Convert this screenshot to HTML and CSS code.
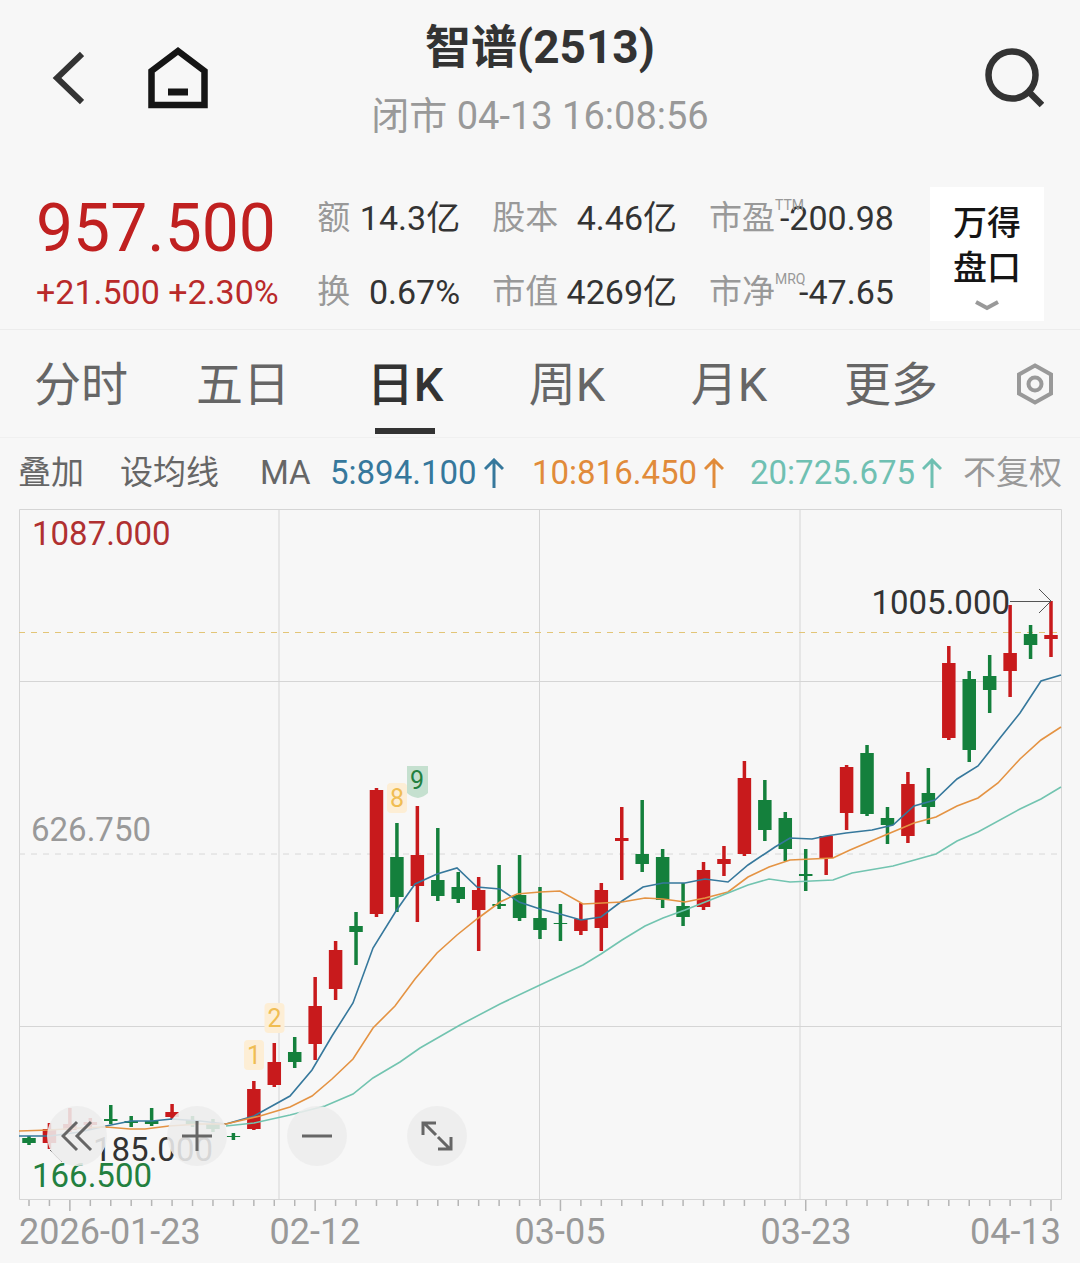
FILE: index.html
```html
<!DOCTYPE html>
<html lang="zh-CN">
<head>
  <meta charset="UTF-8" />
  <meta name="viewport" content="width=device-width, initial-scale=1.0" />
  <title>智谱(2513)</title>
  <link rel="stylesheet" href="styles.css">
</head>
<body>
  <header class="header">
    <nav class="header-left">
      <button class="icon-btn" aria-label="返回">
        <svg width="32" height="56" viewBox="0 0 32 56"><path d="M30 4L5 28l25 24" fill="none" stroke="#333" stroke-width="6"/></svg>
      </button>
      <a class="icon-btn" href="#" aria-label="首页">
        <svg width="60" height="64" viewBox="0 0 60 64"><path d="M3.500 59V25L30 5l26.500 20v34z" fill="none" stroke="#151515" stroke-width="6.500"/><path d="M20 46h20" stroke="#151515" stroke-width="7"/></svg>
      </a>
    </nav>
    <div class="header-title">
      <h1>智谱(2513)</h1>
      <p>闭市 04-13 16:08:56</p>
    </div>
    <button class="icon-btn search" aria-label="搜索">
      <svg width="60" height="62" viewBox="0 0 60 62"><circle cx="28" cy="29" r="23.500" fill="none" stroke="#333" stroke-width="6.500"/><path d="M44 45l14 14" stroke="#333" stroke-width="6.500"/></svg>
    </button>
  </header>

  <section class="quote">
    <div class="price">
      <strong>957.500</strong>
      <span>+21.500 +2.30%</span>
    </div>
    <dl class="stats">
      <div><dt>额</dt><dd>14.3亿</dd></div>
      <div><dt>股本</dt><dd>4.46亿</dd></div>
      <div><dt>市盈<sup>TTM</sup></dt><dd>-200.98</dd></div>
      <div><dt>换</dt><dd>0.67%</dd></div>
      <div><dt>市值</dt><dd>4269亿</dd></div>
      <div><dt>市净<sup>MRQ</sup></dt><dd>-47.65</dd></div>
    </dl>
    <button class="wind">
      <span>万得</span>
      <span>盘口</span>
      <svg width="26" height="12" viewBox="0 0 26 12"><path d="M2 3l11 6 11-6" fill="none" stroke="#999" stroke-width="4"/></svg>
    </button>
  </section>

  <nav class="tabs">
    <button>分时</button>
    <button>五日</button>
    <button class="active">日K</button>
    <button>周K</button>
    <button>月K</button>
    <button>更多</button>
    <button class="settings" aria-label="设置">
      <svg width="38" height="44" viewBox="0 0 38 44"><path d="M19 3.500L35 12.500v19L19 40.500 3 31.500v-19z" fill="none" stroke="#999" stroke-width="4"/><circle cx="19" cy="22" r="6.500" fill="none" stroke="#999" stroke-width="4"/></svg>
    </button>
  </nav>

  <div class="ma-row">
    <button>叠加</button>
    <button>设均线</button>
    <span>MA</span>
    <span class="ma5">5:894.100<svg class="up" viewBox="0 0 20 30"><path d="M10 30V2M1 11l9-9 9 9"/></svg></span>
    <span class="ma10">10:816.450<svg class="up" viewBox="0 0 20 30"><path d="M10 30V2M1 11l9-9 9 9"/></svg></span>
    <span class="ma20">20:725.675<svg class="up" viewBox="0 0 20 30"><path d="M10 30V2M1 11l9-9 9 9"/></svg></span>
    <button class="adjust">不复权</button>
  </div>

  <main class="chart">
    <svg id="kline" viewBox="0 500 1080 763" role="img" aria-label="日K线"></svg>
    <div class="chart-tools">
      <button aria-label="向左">
        <svg width="32" height="32" viewBox="0 0 32 32"><path d="M16 2L2 16l14 14M30 2L16 16l14 14"/></svg>
      </button>
      <button aria-label="放大">
        <svg width="32" height="32" viewBox="0 0 32 32"><path d="M16 1v30M1 16h30"/></svg>
      </button>
      <button aria-label="缩小">
        <svg width="32" height="32" viewBox="0 0 32 32"><path d="M1 16h30"/></svg>
      </button>
      <button aria-label="全屏">
        <svg width="32" height="32" viewBox="0 0 32 32"><path d="M2 15V3h13M3 3l12 12M30 17v12H17M29 29L17 17"/></svg>
      </button>
    </div>
  </main>

  <script src="chart.js"></script>
</body>
</html>
```

FILE: styles.css
```css
* { box-sizing: border-box; }
body { margin: 0; background: #f7f7f7; color: #333; font-family: Roboto, "Noto Sans CJK SC", sans-serif; font-size: 34px; }
button { border: 0; padding: 0; background: none; font: inherit; color: inherit; cursor: pointer; }
svg { display: block; }
h1, p, dl, dd { margin: 0; }

.header { display: grid; grid-template-columns: 1fr auto 1fr; align-items: start; height: 170px; padding: 16px 36px 0 52px; }
.header-left { display: flex; align-items: center; gap: 64px; padding-top: 30px; }
.header-title { text-align: center; margin-right: 16px; }
.header-title h1 { font-size: 46px; line-height: 62px; font-weight: 700; }
.header-title p { font-size: 38px; line-height: 44px; margin-top: 16px; color: #999; }
.search { justify-self: end; padding-top: 30px; }

.quote { display: grid; grid-template-columns: 249fr 576fr 114fr; grid-template-rows: 100%; column-gap: 34px; height: 160px; padding: 17px 36px 8px; border-bottom: 1px solid #ececec; }
.price { color: #b92a2a; white-space: nowrap; }
.price strong { display: block; font-size: 66px; line-height: 84px; font-weight: 400; color: #c02020; }
.price span { display: block; line-height: 42px; }
.stats { display: grid; grid-template-columns: 143fr 185fr 185fr; grid-auto-rows: 74px; column-gap: 32px; margin: -6px 2px 0 -2px; line-height: 40px; }
.stats div { display: flex; align-items: center; justify-content: space-between; white-space: nowrap; }
.stats dt { position: relative; font-size: 33px; color: #999; }
.stats sup { position: absolute; left: 100%; bottom: 100%; margin-bottom: -15px; font-size: 14px; line-height: 16px; }
.wind { display: flex; flex-direction: column; align-items: center; align-self: start; padding: 14px 0 10px; background: #fff; color: #151515; font-weight: 500; line-height: 45px; }
.wind svg { margin-top: 8px; }

.tabs { display: grid; grid-template-columns: repeat(6, 3fr) 2fr; height: 108px; border-bottom: 1px solid #f0f0f0; }
.tabs button { position: relative; padding-top: 2px; font-size: 47px; line-height: 60px; color: #666; }
.tabs .active { color: #333; font-weight: 500; }
.tabs .active::after { content: ""; position: absolute; left: 50%; bottom: 3px; width: 60px; height: 6px; margin-left: -30px; background: #333; }
.tabs .settings { justify-self: end; padding: 0 26px; }

.ma-row { display: grid; grid-template-columns: 102fr 140fr 70fr 202fr 218fr 213fr 98fr; align-items: center; height: 62px; padding: 8px 18px 0; font-size: 33px; line-height: 40px; color: #666; white-space: nowrap; }
.ma-row button { text-align: left; }
.ma-row span { display: flex; align-items: center; gap: 7px; }
.ma-row .ma5 { color: #36789c; }
.ma-row .ma10 { color: #e18b3a; }
.ma-row .ma20 { color: #6fc0b2; }
.ma-row .adjust { color: #999; }
.up { width: 20px; height: 30px; fill: none; stroke: currentColor; stroke-width: 3; }

.chart { position: relative; }
.chart > svg { width: 100%; }
.grid { stroke: #d5d5d5; fill: none; }
.tick { stroke: #b5b5b5; stroke-width: 1.5; }
.dash { stroke: #d8d8d8; stroke-dasharray: 6 6; }
.dash.last { stroke: #e3c577; }
.up-candle { fill: #c81a1c; }
.down-candle { fill: #14803c; }
.line { fill: none; stroke-width: 1.6; }
.line5 { stroke: #36789c; }
.line10 { stroke: #e49343; }
.line20 { stroke: #72c4b0; }
.pointer { fill: none; stroke: #555; }
.text { font-size: 33px; fill: #333; }
.text.high { fill: #b03030; }
.text.mid { fill: #999; }
.text.low { fill: #23803f; }
.date { font-size: 36px; fill: #999; }
.signal { font-size: 25px; text-anchor: middle; fill: #f0bd53; }
.signal.nine { fill: #23803f; }
.signal-bg { fill: #fdeed5; }
.signal-bg.nine { fill: #c5e0cf; }

.chart-tools { position: absolute; left: 47px; bottom: 97px; display: flex; gap: 60px; }
.chart-tools button { display: flex; align-items: center; justify-content: center; width: 60px; height: 60px; border-radius: 50%; background: rgba(237, 237, 237, 0.88); }
.chart-tools svg { fill: none; stroke: #666; stroke-width: 3; }
```

FILE: chart.js
```js
// one row per day: up/down, then y of high, body top, body bottom, low
const candles = [
  ['d', 1136, 1138, 1143, 1145], ['u', 1123, 1129, 1143, 1149], ['u', 1108, 1124, 1130, 1132],
  ['u', 1118, 1122, 1125, 1130], ['d', 1105, 1119, 1121, 1124], ['d', 1116, 1121, 1123, 1127],
  ['d', 1108, 1121, 1124, 1126], ['u', 1104, 1112, 1117, 1119], ['d', 1116, 1120, 1124, 1127],
  ['d', 1119, 1124, 1129, 1132], ['d', 1133, 1136, 1137, 1140], ['u', 1081, 1089, 1129, 1130],
  ['u', 1043, 1062, 1085, 1087], ['d', 1037, 1052, 1062, 1068], ['u', 977, 1006, 1044, 1060],
  ['u', 941, 950, 989, 1000], ['d', 912, 926, 932, 965], ['u', 788, 790, 914, 917],
  ['d', 823, 857, 897, 912], ['u', 806, 855, 886, 922], ['d', 828, 880, 896, 901],
  ['d', 872, 887, 899, 903], ['u', 877, 890, 910, 951], ['d', 865, 904, 906, 909],
  ['d', 855, 895, 918, 921], ['d', 887, 918, 930, 939], ['d', 904, 923, 924, 941],
  ['u', 903, 919, 931, 935], ['u', 883, 890, 928, 951], ['u', 807, 838, 841, 880],
  ['d', 800, 854, 864, 872], ['d', 849, 857, 900, 908], ['d', 883, 906, 917, 926],
  ['u', 862, 870, 907, 910], ['u', 846, 859, 864, 876], ['u', 761, 778, 854, 856],
  ['d', 780, 800, 830, 841], ['d', 812, 818, 849, 861], ['d', 849, 874, 876, 891],
  ['u', 836, 836, 858, 875], ['u', 765, 767, 813, 830], ['d', 745, 753, 814, 816],
  ['d', 807, 818, 825, 844], ['u', 772, 784, 836, 843], ['d', 768, 793, 807, 824],
  ['u', 646, 663, 738, 740], ['d', 671, 679, 750, 762], ['d', 655, 676, 690, 713],
  ['u', 605, 653, 671, 697], ['d', 625, 634, 645, 659], ['u', 601, 635, 639, 657]
];

const lines = {
  line5: '19,1136 50,1136 80,1132 106,1126 131,1121 152,1121 172,1119 200,1121 226,1124 254,1116 290,1096 312,1070 332,1036 353,1003 373,948 396,911 415,884 437,874 457,868 477,887 500,889 519,902 540,909 560,914 581,920 601,917 622,901 643,887 663,883 685,883 705,879 728,882 748,865 775,847 790,838 812,839 826,836 846,833 872,830 893,825 914,806 935,800 957,779 978,766 1000,738 1020,713 1041,681 1061,675',
  line10: '19,1131 50,1130 80,1128 106,1127 130,1129 145,1129 169,1126 200,1124 226,1124 260,1116 290,1107 312,1096 332,1079 353,1059 373,1028 395,1006 415,979 437,953 457,935 477,919 500,902 517,894 540,892 560,891 583,904 622,902 645,898 663,899 685,902 705,898 728,892 748,877 769,867 790,860 833,858 850,850 883,836 914,823 936,817 957,806 978,798 998,783 1020,759 1041,740 1061,727',
  line20: '226,1126 254,1123 290,1115 325,1106 353,1094 373,1078 400,1062 420,1048 460,1025 500,1004 540,985 583,965 601,954 622,940 645,926 663,918 685,910 728,893 748,885 769,879 790,882 833,880 852,873 893,866 936,854 957,841 978,832 1020,809 1041,799 1061,787'
};

const x = i => 29 + i * 20.44;

let svg = '<path class="grid" d="M19.5 509.500H1061.500V1199.500H19.500ZM279 509V1199M539.500 509V1199M800 509V1199M19 681.500H1061M19 1026.500H1061"/>';
svg += '<path class="dash last" d="M19 632.500H1061"/><path class="dash" d="M19 854H1061"/>';

candles.forEach(([dir, high, top, bottom, low], i) => {
  const cls = dir === 'u' ? 'up-candle' : 'down-candle';
  svg += `<rect class="${cls}" x="${x(i) - 1.75}" y="${high}" width="3.5" height="${low - high}"/>`;
  svg += `<rect class="${cls}" x="${x(i) - 6.75}" y="${top}" width="13.5" height="${bottom - top}"/>`;
  svg += `<path class="tick" d="M${x(i)} 1200V${i % 12 === 2 ? 1211 : 1206}"/>`;
});

for (const name in lines) {
  svg += `<polyline class="line ${name}" points="${lines[name]}"/>`;
}

// TD sequence marks
[[254, 1055, 1], [274.5, 1018, 2], [397, 798, 8]].forEach(([cx, cy, n]) => {
  svg += `<rect class="signal-bg" x="${cx - 10}" y="${cy - 15}" width="20" height="30" rx="4"/>`;
  svg += `<text class="signal" x="${cx}" y="${cy + 9}">${n}</text>`;
});
svg += '<path class="signal-bg nine" d="M407 766h21v27q-4 4-10 5-7-1-11-5z"/><text class="signal nine" x="417" y="789">9</text>';

svg += '<path class="pointer" d="M1010 601.500H1051M1039 589l12 12-12 12M50 1150l12 12"/>';
svg += `
  <text class="text high" x="32" y="545">1087.000</text>
  <text class="text mid" x="31" y="841">626.750</text>
  <text class="text" x="1010" y="614" text-anchor="end">1005.000</text>
  <text class="text" x="93" y="1161">185.000</text>
  <text class="text low" x="32" y="1187">166.500</text>
  <text class="date" x="19" y="1244">2026-01-23</text>
  <text class="date" x="315" y="1244" text-anchor="middle">02-12</text>
  <text class="date" x="560" y="1244" text-anchor="middle">03-05</text>
  <text class="date" x="806" y="1244" text-anchor="middle">03-23</text>
  <text class="date" x="1061" y="1244" text-anchor="end">04-13</text>`;

document.getElementById('kline').innerHTML = svg;
```
